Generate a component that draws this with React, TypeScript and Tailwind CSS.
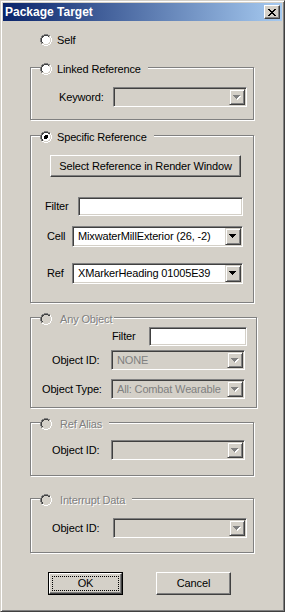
import { useId, type ReactNode } from "react";

const raised =
  "border border-t-white border-l-white border-b-[#404040] border-r-[#404040] shadow-[inset_-1px_-1px_0_#808080] bg-[#d4d0c8]";
const sunken =
  "border border-t-[#808080] border-l-[#808080] border-b-white border-r-white shadow-[inset_1px_1px_0_#404040,inset_-1px_-1px_0_#d4d0c8]";
const dis = "text-[#808080] [text-shadow:1px_1px_0_#fff]";

function Radio({ checked = false, disabled = false }: { checked?: boolean; disabled?: boolean }) {
  const id = useId().replace(/[^a-zA-Z0-9]/g, "");
  return (
    <svg width="12" height="12" viewBox="0 0 12 12" shapeRendering="crispEdges" className="shrink-0">
      <defs>
        <linearGradient id={`a${id}`} x1="0" y1="0" x2="1" y2="1">
          <stop offset="0.5" stopColor="#808080" />
          <stop offset="0.5" stopColor="#ffffff" />
        </linearGradient>
        <linearGradient id={`b${id}`} x1="0" y1="0" x2="1" y2="1">
          <stop offset="0.5" stopColor="#404040" />
          <stop offset="0.5" stopColor="#d4d0c8" />
        </linearGradient>
      </defs>
      <circle cx="6" cy="6" r="6" fill={`url(#a${id})`} />
      <circle cx="6" cy="6" r="5" fill={`url(#b${id})`} />
      <circle cx="6" cy="6" r="4" fill={disabled ? "#d4d0c8" : "#ffffff"} />
      {checked && <circle cx="6" cy="6" r="2" fill="#000" />}
    </svg>
  );
}

function Arrow({ disabled = false }: { disabled?: boolean }) {
  return (
    <svg width="8" height="5" viewBox="0 0 8 5" shapeRendering="crispEdges">
      {disabled && <path d="M1 1h7v1H1z M2 2h5v1H2z M3 3h3v1H3z M4 4h1v1H4z" fill="#fff" />}
      <path d="M0 0h7v1H0z M1 1h5v1H1z M2 2h3v1H2z M3 3h1v1H3z" fill={disabled ? "#808080" : "#000"} />
    </svg>
  );
}

function Combo({ className, text = "", disabled = false }: { className: string; text?: string; disabled?: boolean }) {
  return (
    <div
      className={`flex p-[1px] ${sunken} ${disabled ? "bg-[#d4d0c8] text-[#808080]" : "bg-white text-black"} ${className}`}
    >
      <div className="flex-1 flex items-center pl-[4px] whitespace-nowrap overflow-hidden">{text}</div>
      <div className="w-[16px] flex items-center justify-center border border-t-[#d4d0c8] border-l-[#d4d0c8] border-b-[#404040] border-r-[#404040] shadow-[inset_1px_1px_0_#fff,inset_-1px_-1px_0_#808080] bg-[#d4d0c8]">
        <Arrow disabled={disabled} />
      </div>
    </div>
  );
}

function Legend({
  label,
  checked = false,
  disabled = false,
  pr,
}: {
  label: string;
  checked?: boolean;
  disabled?: boolean;
  pr: string;
}) {
  return (
    <div className={`-mt-[5px] ml-[9px] w-fit h-[12px] flex items-center bg-[#d4d0c8] ${pr}`}>
      <Radio checked={checked} disabled={disabled} />
      <span className={disabled ? `ml-[8px] ${dis}` : "ml-[5px]"}>{label}</span>
    </div>
  );
}

function Group({ className, children }: { className: string; children: ReactNode }) {
  return (
    <div
      className={`ml-[27px] border border-[#808080] shadow-[1px_1px_0_#fff,inset_1px_1px_0_#fff] ${className}`}
    >
      {children}
    </div>
  );
}

function CloseGlyph() {
  return (
    <svg width="8" height="7" viewBox="0 0 8 7" shapeRendering="crispEdges">
      <path
        d="M0 0h2v1H0z M6 0h2v1H6z M1 1h2v1H1z M5 1h2v1H5z M2 2h4v1H2z M3 3h2v1H3z M2 4h4v1H2z M1 5h2v1H1z M5 5h2v1H5z M0 6h2v1H0z M6 6h2v1H6z"
        fill="#000"
      />
    </svg>
  );
}

export default function App() {
  return (
    <div className="w-[285px] h-[612px] flex flex-col p-[2px] bg-[#d4d0c8] border border-t-[#d4d0c8] border-l-[#d4d0c8] border-b-[#404040] border-r-[#404040] shadow-[inset_1px_1px_0_#fff,inset_-1px_-1px_0_#808080] font-['Liberation_Sans',Arial,sans-serif] text-[11px] leading-[13px] tracking-[-0.15px] text-black select-none">
      {/* Title bar */}
      <div className="h-[18px] shrink-0 flex items-center justify-between bg-[linear-gradient(to_right,#0a246a,#a6caf0)]">
        <span className="pl-[2px] text-white font-bold text-[12px] tracking-normal">Package Target</span>
        <div className={`mr-[2px] w-[16px] h-[14px] flex items-center justify-center ${raised}`}>
          <CloseGlyph />
        </div>
      </div>

      {/* Self */}
      <div className="mt-[13px] ml-[37px] h-[12px] flex items-center">
        <Radio />
        <span className="ml-[5px]">Self</span>
      </div>

      {/* Linked Reference */}
      <Group className="mt-[21px] w-[224px] pb-[12px]">
        <Legend label="Linked Reference" pr="pr-[7px]" />
        <div className="mt-[12px] flex items-center">
          <span className="ml-[28px] w-[54px]">Keyword:</span>
          <Combo className="w-[134px] h-[20px]" disabled />
        </div>
      </Group>

      {/* Specific Reference */}
      <Group className="mt-[15px] w-[224px] pb-[18px]">
        <Legend label="Specific Reference" checked pr="pr-[7px]" />
        <div className={`mt-[12px] ml-[19px] w-[191px] h-[22px] flex items-center justify-center ${raised}`}>
          Select Reference in Render Window
        </div>
        <div className="mt-[20px] flex items-center">
          <span className="ml-[14px] w-[33px]">Filter</span>
          <div className={`w-[165px] h-[19px] bg-white ${sunken}`} />
        </div>
        <div className="mt-[10px] flex items-center">
          <span className="ml-[16px] w-[25px]">Cell</span>
          <Combo className="w-[171px] h-[21px]" text="MixwaterMillExterior (26, -2)" />
        </div>
        <div className="mt-[16px] flex items-center">
          <span className="ml-[16px] w-[25px]">Ref</span>
          <Combo className="w-[171px] h-[21px]" text="XMarkerHeading 01005E39" />
        </div>
      </Group>

      {/* Any Object */}
      <Group className="mt-[14px] w-[227px] pb-[8px]">
        <Legend label="Any Object" disabled pr="pr-[2px]" />
        <div className="mt-[2px] flex items-center">
          <span className="ml-[81px] w-[37px]">Filter</span>
          <div className={`w-[98px] h-[19px] bg-white ${sunken}`} />
        </div>
        <div className="mt-[4px] flex items-center">
          <span className="ml-[21px] w-[59px]">Object ID:</span>
          <Combo className="w-[134px] h-[20px]" text="NONE" disabled />
        </div>
        <div className="mt-[9px] flex items-center">
          <span className="ml-[11px] w-[69px]">Object Type:</span>
          <Combo className="w-[134px] h-[20px]" text="All: Combat Wearable" disabled />
        </div>
      </Group>

      {/* Ref Alias */}
      <Group className="mt-[14px] w-[224px] pb-[15px]">
        <Legend label="Ref Alias" disabled pr="pr-[7px]" />
        <div className="mt-[10px] flex items-center">
          <span className="ml-[21px] w-[59px]">Object ID:</span>
          <Combo className="w-[134px] h-[20px]" disabled />
        </div>
      </Group>

      {/* Interrupt Data */}
      <Group className="mt-[22px] w-[224px] pb-[14px]">
        <Legend label="Interrupt Data" disabled pr="pr-[7px]" />
        <div className="mt-[12px] flex items-center">
          <span className="ml-[21px] w-[61px]">Object ID:</span>
          <Combo className="w-[134px] h-[20px]" disabled />
        </div>
      </Group>

      {/* Buttons */}
      <div className="mt-[19px] flex">
        <div className="ml-[45px] w-[75px] h-[23px] flex border border-black">
          <div className={`flex-1 flex p-[2px] ${raised}`}>
            <div className="flex-1 flex items-center justify-center border border-dotted border-black">OK</div>
          </div>
        </div>
        <div className={`ml-[33px] w-[75px] h-[23px] flex items-center justify-center ${raised}`}>Cancel</div>
      </div>
    </div>
  );
}
